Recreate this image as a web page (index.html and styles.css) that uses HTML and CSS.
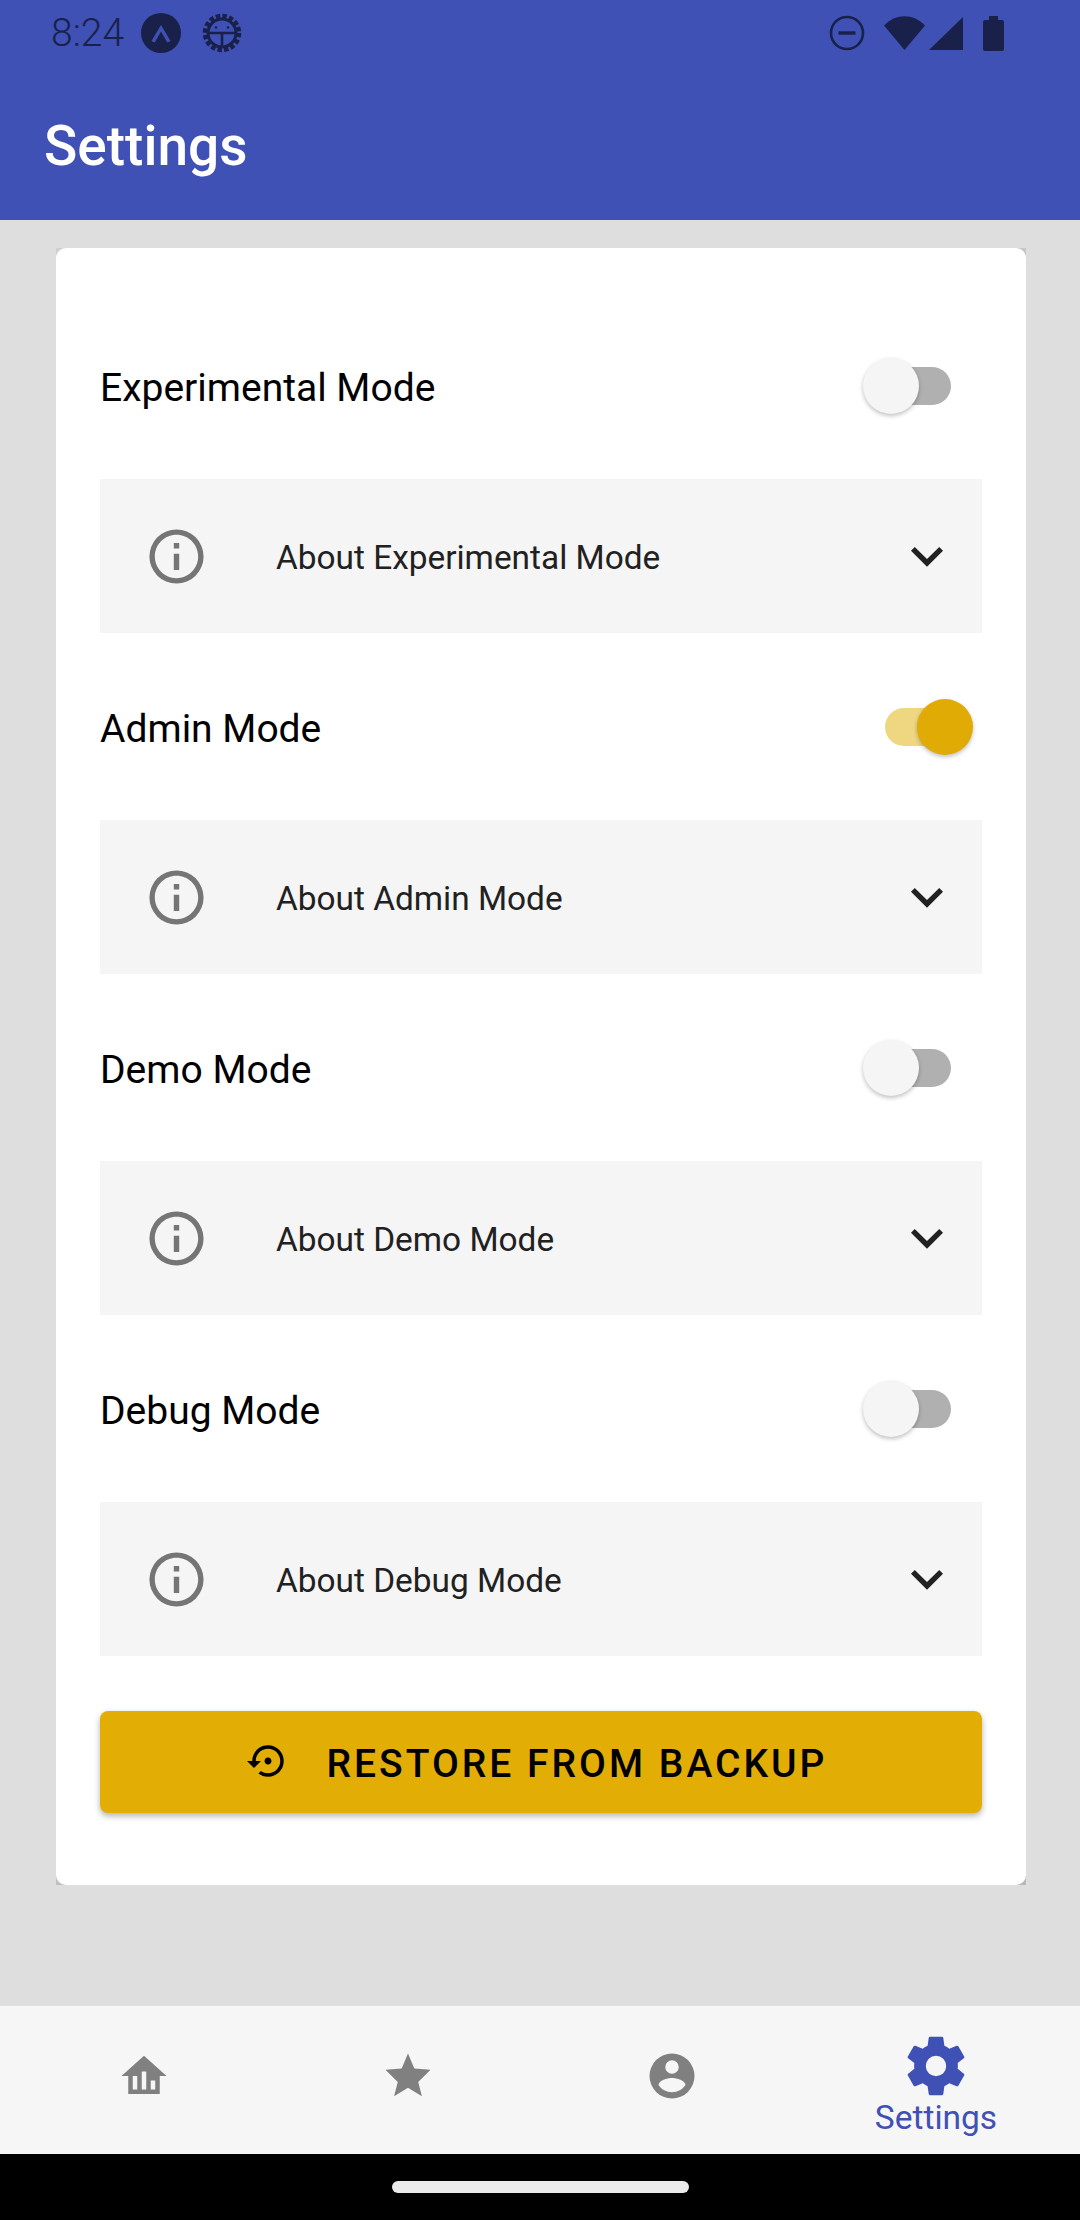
FILE: index.html

```html
<!DOCTYPE html>
<html lang="en">
<head>
  <meta charset="UTF-8">
  <title>Settings</title>
  <link rel="stylesheet" href="styles.css">
</head>
<body>
  <svg class="defs" width="0" height="0">
    <symbol id="i-info" viewBox="0 0 24 24"><path d="M11,9H13V7H11M12,20C7.59,20 4,16.41 4,12C4,7.59 7.59,4 12,4C16.41,4 20,7.59 20,12C20,16.41 16.41,20 12,20M12,2A10,10 0 0,0 2,12A10,10 0 0,0 12,22A10,10 0 0,0 22,12A10,10 0 0,0 12,2M11,17H13V11H11V17Z"/></symbol>
    <symbol id="i-chevron" viewBox="0 0 24 24"><path d="M7.41,8.58L12,13.17L16.59,8.58L18,10L12,16L6,10L7.41,8.58Z"/></symbol>
  </svg>

  <header class="appbar">
    <div class="statusbar">
      <div class="status-left">
        <span class="clock">8:24</span>
        <svg class="st-expo" viewBox="0 0 40 40"><circle cx="20" cy="20" r="20" fill="#19214a"/><path d="M10.5 28L20 12L29.5 28L26.3 29.5L20 18.5L13.7 29.5Z" fill="#3f51b5"/></svg>
        <svg class="st-gear" viewBox="0 0 40 40" fill="none" stroke="#19214a">
          <circle cx="20" cy="20" r="17" stroke-width="4.5" stroke-dasharray="4.4 2.27"/>
          <circle cx="20" cy="20" r="14" stroke-width="3"/>
          <path d="M6 20H34M20 20V34" stroke-width="2.6"/>
          <circle cx="14" cy="14.5" r="1.3" fill="#19214a" stroke="none"/>
          <circle cx="26" cy="14.5" r="1.3" fill="#19214a" stroke="none"/>
        </svg>
      </div>
      <div class="status-right">
        <svg class="st-dnd" viewBox="0 0 36 36" fill="none" stroke="#19214a"><circle cx="18" cy="18" r="16" stroke-width="2.6"/><path d="M9.5 18H26.5" stroke-width="3.4"/></svg>
        <svg class="st-wifi" viewBox="0 0 41 34"><path d="M0 9.5C11.5 -3 29.5 -3 41 9.5L20.5 34Z" fill="#19214a"/></svg>
        <svg class="st-signal" viewBox="0 0 34 33"><path d="M34 0V33H0Z" fill="#19214a"/></svg>
        <svg class="st-battery" viewBox="0 0 21 35"><path d="M6 0H15V4H19A2 2 0 0 1 21 6V33A2 2 0 0 1 19 35H2A2 2 0 0 1 0 33V6A2 2 0 0 1 2 4H6Z" fill="#19214a"/></svg>
      </div>
    </div>
    <h1 class="title">Settings</h1>
  </header>

  <main class="content">
    <div class="card-shadow">
    <section class="card">
      <div class="setting">
        <span class="setting-label">Experimental Mode</span>
        <div class="switch"><span class="track"></span><span class="thumb"></span></div>
      </div>
      <div class="accordion">
        <svg class="info-icon"><use href="#i-info"/></svg>
        <span class="accordion-title">About Experimental Mode</span>
        <svg class="chevron"><use href="#i-chevron"/></svg>
      </div>

      <div class="setting">
        <span class="setting-label">Admin Mode</span>
        <div class="switch on"><span class="track"></span><span class="thumb"></span></div>
      </div>
      <div class="accordion">
        <svg class="info-icon"><use href="#i-info"/></svg>
        <span class="accordion-title">About Admin Mode</span>
        <svg class="chevron"><use href="#i-chevron"/></svg>
      </div>

      <div class="setting">
        <span class="setting-label">Demo Mode</span>
        <div class="switch"><span class="track"></span><span class="thumb"></span></div>
      </div>
      <div class="accordion">
        <svg class="info-icon"><use href="#i-info"/></svg>
        <span class="accordion-title">About Demo Mode</span>
        <svg class="chevron"><use href="#i-chevron"/></svg>
      </div>

      <div class="setting">
        <span class="setting-label">Debug Mode</span>
        <div class="switch"><span class="track"></span><span class="thumb"></span></div>
      </div>
      <div class="accordion">
        <svg class="info-icon"><use href="#i-info"/></svg>
        <span class="accordion-title">About Debug Mode</span>
        <svg class="chevron"><use href="#i-chevron"/></svg>
      </div>

      <button class="restore">
        <svg class="restore-icon" viewBox="0 0 24 24"><path d="M14 12c0-1.1-.9-2-2-2s-2 .9-2 2 .9 2 2 2 2-.9 2-2zm-2-9c-4.97 0-9 4.03-9 9H0l4 4 4-4H5c0-3.87 3.13-7 7-7s7 3.13 7 7-3.13 7-7 7c-1.51 0-2.91-.49-4.06-1.3l-1.42 1.44C8.04 20.3 9.94 21 12 21c4.97 0 9-4.03 9-9s-4.03-9-9-9z"/></svg>
        <span class="restore-text">RESTORE FROM BACKUP</span>
      </button>
    </section>
    </div>
  </main>

  <nav class="tabs">
    <div class="tab">
      <svg class="tab-icon" viewBox="0 0 24 24"><path d="M12 3L2 12H5V20H19V12H22L12 3M9 18H7V12H9V18M13 18H11V10H13V18M17 18H15V14H17V18Z"/></svg>
    </div>
    <div class="tab">
      <svg class="tab-icon" viewBox="0 0 24 24"><path d="M12,17.27L18.18,21L16.54,14.64L22,9.24L14.81,8.62L12,2L9.19,8.62L2,9.24L7.45,14.64L5.82,21L12,17.27Z"/></svg>
    </div>
    <div class="tab">
      <svg class="tab-icon" viewBox="0 0 24 24"><path d="M12,19.2C9.5,19.2 7.29,17.92 6,16C6.03,14 10,12.9 12,12.9C14,12.9 17.97,14 18,16C16.71,17.92 14.5,19.2 12,19.2M12,5A3,3 0 0,1 15,8A3,3 0 0,1 12,11A3,3 0 0,1 9,8A3,3 0 0,1 12,5M12,2A10,10 0 0,0 2,12A10,10 0 0,0 12,22A10,10 0 0,0 22,12A10,10 0 0,0 12,2Z"/></svg>
    </div>
    <div class="tab active">
      <svg class="tab-icon" viewBox="0 0 24 24"><path d="M12,15.5A3.5,3.5 0 0,1 8.5,12A3.5,3.5 0 0,1 12,8.5A3.5,3.5 0 0,1 15.5,12A3.5,3.5 0 0,1 12,15.5M19.43,12.97C19.47,12.65 19.5,12.33 19.5,12C19.5,11.67 19.47,11.34 19.43,11L21.54,9.37C21.73,9.22 21.78,8.95 21.66,8.73L19.66,5.27C19.54,5.05 19.27,4.96 19.05,5.05L16.56,6.05C16.04,5.66 15.5,5.32 14.87,5.07L14.5,2.42C14.46,2.18 14.25,2 14,2H10C9.75,2 9.54,2.18 9.5,2.42L9.13,5.07C8.5,5.32 7.96,5.66 7.44,6.05L4.95,5.05C4.73,4.96 4.46,5.05 4.34,5.27L2.34,8.73C2.21,8.95 2.27,9.22 2.46,9.37L4.57,11C4.53,11.34 4.5,11.67 4.5,12C4.5,12.33 4.53,12.65 4.57,12.97L2.46,14.63C2.27,14.78 2.21,15.05 2.34,15.27L4.34,18.73C4.46,18.95 4.73,19.03 4.95,18.95L7.44,17.94C7.96,18.34 8.5,18.68 9.13,18.93L9.5,21.58C9.54,21.82 9.75,22 10,22H14C14.25,22 14.46,21.82 14.5,21.58L14.87,18.93C15.5,18.67 16.04,18.34 16.56,17.94L19.05,18.95C19.27,19.03 19.54,18.95 19.66,18.73L21.66,15.27C21.78,15.05 21.73,14.78 21.54,14.63L19.43,12.97Z"/></svg>
      <span class="tab-label">Settings</span>
    </div>
  </nav>

  <div class="gesture-bar"><span class="gesture-pill"></span></div>
</body>
</html>
```

FILE: styles.css

```css
* {
  box-sizing: border-box;
}
body {
  margin: 0;
  height: 2220px;
  display: flex;
  flex-direction: column;
  overflow: hidden;
  background-color: #dedede;
  font-family: Roboto, "Noto Sans", sans-serif;
  color: #000;
}
.defs {
  position: absolute;
}

/* app bar + android status bar */
.appbar {
  height: 220px;
  flex: none;
  background-color: #3f51b5;
}
.statusbar {
  height: 66px;
  display: flex;
  justify-content: space-between;
  align-items: center;
  padding: 0 76px 0 51px;
}
.status-left, .status-right {
  display: flex;
  align-items: center;
}
.clock {
  font-size: 39px;
  font-weight: 300;
  color: #19214a;
  width: 90px;
}
.st-expo {
  width: 40px;
  height: 40px;
}
.st-gear {
  width: 40px;
  height: 40px;
  margin-left: 21px;
}
.st-dnd {
  width: 36px;
  height: 36px;
  margin-right: 19px;
}
.st-wifi {
  width: 41px;
  height: 34px;
  margin-right: 4px;
}
.st-signal {
  width: 34px;
  height: 33px;
  margin-right: 20px;
}
.st-battery {
  width: 21px;
  height: 35px;
}
.title {
  margin: 0;
  padding: 49px 0 0 44px;
  font-size: 55px;
  line-height: 62px;
  font-weight: 500;
  color: #fff;
}

/* card */
.content {
  flex: 1;
  padding: 28px 54px 0 56px;
}
/* the elevation on the device only shows in the rounded corners */
.card-shadow {
  background: linear-gradient(135deg, #d0d0d0, #b8b8b8);
}
.card {
  background-color: #fff;
  border-radius: 10px;
  padding: 44px 44px 72px;
}
.setting {
  height: 187px;
  display: flex;
  justify-content: space-between;
  align-items: center;
  padding-right: 9px;
}
.setting-label {
  font-size: 39px;
  padding-top: 5px;
}

/* switch */
.switch {
  position: relative;
  width: 110px;
  height: 56px;
  display: flex;
  align-items: center;
}
.track {
  position: absolute;
  left: 19px;
  top: 9px;
  width: 69px;
  height: 38px;
  border-radius: 19px;
  background-color: #b0b0b0;
}
.thumb {
  position: relative;
  width: 56px;
  height: 56px;
  border-radius: 50%;
  background-color: #f5f5f5;
  box-shadow: 0 2px 4px rgba(0, 0, 0, 0.25);
}
.switch.on {
  justify-content: flex-end;
}
.switch.on .track {
  left: 22px;
  background-color: #efd681;
}
.switch.on .thumb {
  background-color: #dfab04;
}

/* accordion */
.accordion {
  height: 154px;
  display: flex;
  align-items: center;
  background-color: #f5f5f5;
  padding: 0 23px 0 44px;
}
.info-icon {
  width: 65px;
  height: 65px;
  fill: #757575;
  flex: none;
}
.accordion-title {
  flex: 1;
  margin-left: 67px;
  padding-top: 2px;
  font-size: 33.4px;
  color: #212121;
}
.chevron {
  width: 64px;
  height: 64px;
  fill: #212121;
  flex: none;
}

/* button */
.restore {
  width: 100%;
  height: 102px;
  margin-top: 55px;
  padding: 0 8px 0 0;
  display: flex;
  align-items: center;
  justify-content: center;
  border: none;
  border-radius: 8px;
  background-color: #e2ae06;
  color: #000;
  font-family: inherit;
  font-size: 39px;
  font-weight: 500;
  letter-spacing: 3px;
  box-shadow: 0 3px 6px rgba(0, 0, 0, 0.3);
}
.restore-icon {
  width: 42px;
  height: 42px;
  margin: -2px 38px 0 0;
  fill: #000;
}
.restore-text {
  padding-top: 4px;
}

/* bottom tabs */
.tabs {
  height: 148px;
  flex: none;
  display: flex;
  padding: 0 12px;
  background-color: #f6f6f6;
}
.tab {
  flex: 1;
  display: flex;
  flex-direction: column;
  align-items: center;
  justify-content: center;
  padding-bottom: 8px;
}
.tab-icon {
  width: 54px;
  height: 54px;
  fill: #808080;
}
.tab.active {
  justify-content: flex-start;
  padding-top: 25px;
}
.tab.active .tab-icon {
  width: 70px;
  height: 70px;
  fill: #3f51b5;
}
.tab-label {
  font-size: 33.5px;
  line-height: 34px;
  color: #3f51b5;
}

/* gesture nav */
.gesture-bar {
  height: 66px;
  flex: none;
  display: flex;
  justify-content: center;
  padding-top: 27px;
  background-color: #000;
}
.gesture-pill {
  width: 297px;
  height: 12px;
  border-radius: 6px;
  background-color: #ebebeb;
}
```
